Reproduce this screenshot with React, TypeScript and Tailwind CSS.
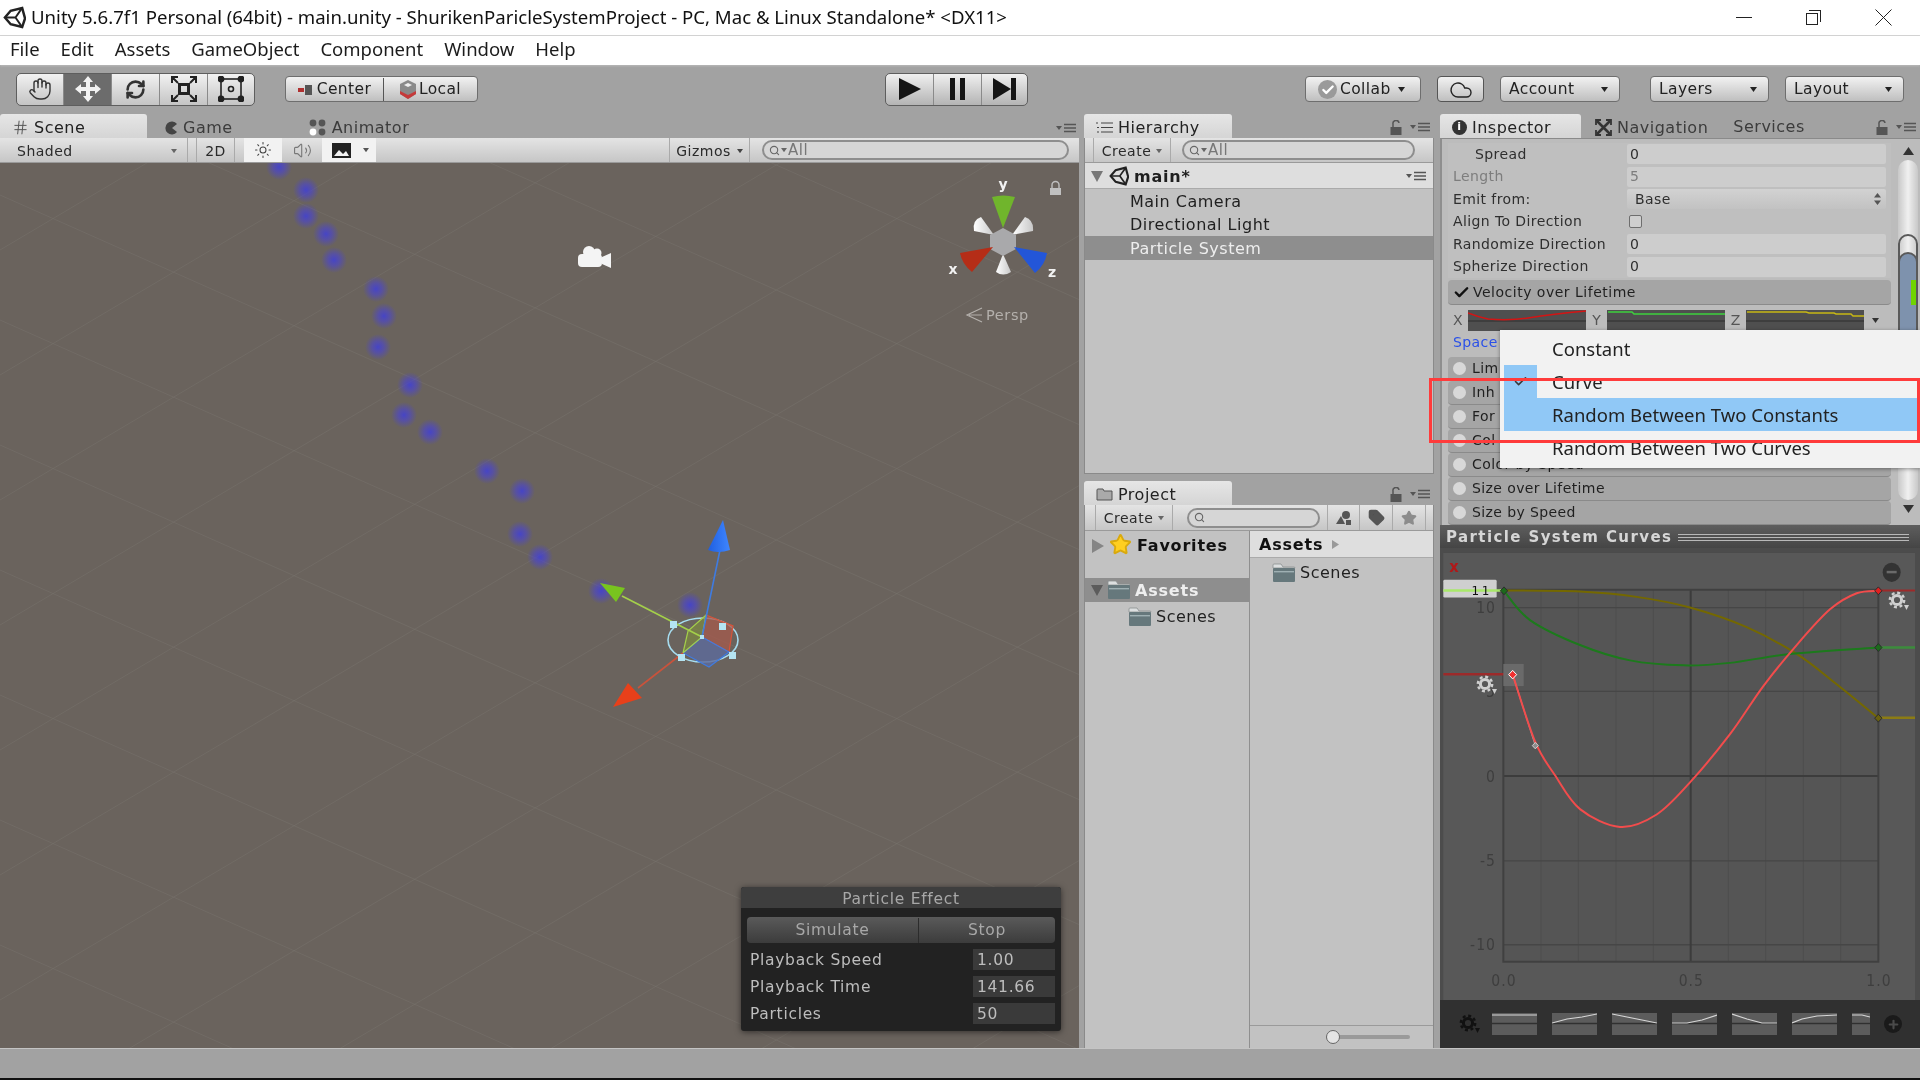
import React from 'react';
import { Hand, RefreshCw, Cloud, Sun, Volume2, Hash, Tag, Star, Search, Check, Plus } from 'lucide-react';

const smooth = (pts: number[][]) => {
  let d = `M${pts[0][0]} ${pts[0][1]}`;
  for (let i = 0; i < pts.length - 1; i++) {
    const p0 = pts[i - 1] || pts[i];
    const p1 = pts[i];
    const p2 = pts[i + 1];
    const p3 = pts[i + 2] || p2;
    d += ` C${p1[0] + (p2[0] - p0[0]) / 6} ${p1[1] + (p2[1] - p0[1]) / 6} ${p2[0] - (p3[0] - p1[0]) / 6} ${p2[1] - (p3[1] - p1[1]) / 6} ${p2[0]} ${p2[1]}`;
  }
  return d;
};

const UnityLogo = ({ size = 22, color = '#222' }: { size?: number; color?: string }) => (
  <svg width={size} height={size} viewBox="0 0 24 24" fill="none" stroke={color} strokeWidth="2.6">
    <path d="M2 12 L8 5 L20 2 L23 13 L20 22 L8 19 Z" />
    <path d="M2 12 H13 L20 2 M13 12 L20 22" strokeWidth="2" />
  </svg>
);

const MenuLines = () => (
  <svg width="20" height="10" viewBox="0 0 20 10" className="shrink-0">
    <path d="M0 3 H6 L3 7 Z" fill="#555" />
    <path d="M8 1.5 H20 M8 5 H20 M8 8.5 H20" stroke="#555" strokeWidth="1.4" />
  </svg>
);

const LockIcon = () => (
  <svg width="12" height="15" viewBox="0 0 12 15" className="shrink-0">
    <path d="M3 7 V4 a3 3 0 0 1 6 -1" fill="none" stroke="#555" strokeWidth="1.5" />
    <rect x="0.5" y="7" width="11" height="8" fill="#555" />
  </svg>
);

const Caret = ({ color = '#444', size = 7 }: { color?: string; size?: number }) => (
  <svg width={size} height={size * 0.7} viewBox="0 0 10 7" className="shrink-0">
    <path d="M0 0 H10 L5 7 Z" fill={color} />
  </svg>
);

const Gear = ({ color = '#d0d0d0' }: { color?: string }) => (
  <svg width="22" height="20" viewBox="0 0 22 20" className="shrink-0">
    <circle cx="9" cy="9" r="4.6" fill="none" stroke={color} strokeWidth="3" />
    <circle cx="9" cy="9" r="7.2" fill="none" stroke={color} strokeWidth="2.4" strokeDasharray="3 2.65" />
    <path d="M16 14 H21 L18.5 19 Z" fill={color} />
  </svg>
);

const FolderIcon = () => (
  <svg width="24" height="20" viewBox="0 0 24 20" className="shrink-0">
    <path d="M1 5 V2 Q1 1 2 1 H9 L11 4 H22 Q23 4 23 5 Z" fill="#dcdfe0" stroke="#8a8f91" strokeWidth="0.8" />
    <rect x="1" y="5" width="22" height="14" rx="1" fill="#66787c" />
    <rect x="2" y="8" width="20" height="1.4" fill="#9fb0b3" />
  </svg>
);

const Field = ({ children, className = '' }: { children?: React.ReactNode; className?: string }) => (
  <div className={`h-[20px] w-[259px] bg-[#cdcdcd] rounded-[2px] flex items-center px-[3px] ${className}`}>{children}</div>
);

const PropRow = ({ label, value, faded, indent }: { label: string; value: string; faded?: boolean; indent?: boolean }) => (
  <div className={`h-[22.5px] flex items-center text-[14px] tracking-[0.4px] ${faded ? 'text-[#7d7d7d]' : 'text-[#2f2f2f]'}`}>
    <div className={`w-[179px] shrink-0 ${indent ? 'pl-[27px]' : 'pl-[5px]'}`}>{label}</div>
    <Field>{value}</Field>
  </div>
);

const ModuleRow = ({ label }: { label: string }) => (
  <div className="h-[24px] shrink-0 bg-[#a5a5a5] rounded-[4px] border-b border-[#8a8a8a] flex items-center pl-[5px] gap-[6px] text-[14px] tracking-[0.4px] text-[#1f1f1f]">
    <div className="w-[13px] h-[13px] rounded-full bg-[#d8d8d8]" />
    <span>{label}</span>
  </div>
);

const MiniCurve = ({ d, color, w = 118 }: { d: string; color: string; w?: number }) => (
  <svg width={w} height="21" viewBox="0 0 118 21" className="bg-[#4f4f4f] shrink-0">
    <path d="M0 11 H118" stroke="#2e2e2e" strokeWidth="1" />
    <path d={d} fill="none" stroke={color} strokeWidth="1.4" />
  </svg>
);

const Preset = ({ d, w = 45 }: { d: string; w?: number }) => (
  <svg width={w} height="22" viewBox={`0 0 ${w} 22`} className="bg-[#5c5c5c] shrink-0">
    <path d={`M0 10.5 H${w}`} stroke="#303030" strokeWidth="1.4" />
    <path d={d} fill="none" stroke="#d6d6d6" strokeWidth="1.2" />
  </svg>
);

const ToolbarBtn = ({ children, className = '' }: { children: React.ReactNode; className?: string }) => (
  <div className={`h-[26px] pt-[1px] rounded-[4px] border border-[#6e6e6e] bg-linear-to-b from-[#f2f2f2] to-[#bfbfbf] flex items-center text-[15.5px] tracking-[0.4px] text-[#222] ${className}`}>
    {children}
  </div>
);

const Tab = ({ children, active, className = '' }: { children: React.ReactNode; active?: boolean; className?: string }) => (
  <div className={`h-[25px] pt-[3px] flex items-center gap-[5px] text-[16px] tracking-[0.5px] ${active ? 'bg-linear-to-b from-[#e6e6e6] to-[#d4d4d4] rounded-t-[3px] text-[#222]' : 'text-[#3c3c3c]'} ${className}`}>
    {children}
  </div>
);

const PanelToolbar = ({ children, className = '' }: { children: React.ReactNode; className?: string }) => (
  <div className={`flex items-center bg-linear-to-b from-[#e4e4e4] to-[#c6c6c6] border-b border-[#9a9a9a] text-[14px] tracking-[0.5px] text-[#2a2a2a] ${className}`}>
    {children}
  </div>
);

const ToolCell = ({ children, className = '' }: { children: React.ReactNode; className?: string }) => (
  <div className={`h-full pt-[2px] flex items-center ${className}`}>{children}</div>
);

const SearchPill = ({ w, all = true }: { w: number; all?: boolean }) => (
  <div style={{ width: w }} className="h-[20px] rounded-full border-2 border-[#8e8e8e] bg-[#d6d6d6] flex items-center pl-[5px] gap-[1px] text-[15px] text-[#777]">
    <Search size={11} color="#666" strokeWidth={2.4} />
    {all && <Caret color="#666" size={6} />}
    {all && <span>All</span>}
  </div>
);

const particles = [
  [279, 167], [306, 190], [306, 216], [326, 234], [334, 260], [376, 289], [384, 316], [378, 347],
  [410, 385], [404, 415], [430, 432], [487, 471], [522, 491], [520, 534], [540, 557], [601, 591], [690, 605],
];

const SceneView = () => (
  <svg width="1080" height="885" viewBox="0 163 1080 885" className="block">
    <defs>
      <radialGradient id="dot">
        <stop offset="0%" stopColor="#3d3de0" stopOpacity="0.8" />
        <stop offset="45%" stopColor="#4a44d0" stopOpacity="0.6" />
        <stop offset="100%" stopColor="#4a44d0" stopOpacity="0" />
      </radialGradient>
      <linearGradient id="blueCone" x1="0" x2="1">
        <stop offset="0%" stopColor="#1f5fe0" />
        <stop offset="100%" stopColor="#3f86ff" />
      </linearGradient>
      <linearGradient id="whiteCone" x1="0" x2="1">
        <stop offset="0%" stopColor="#fff" />
        <stop offset="100%" stopColor="#c8c8c8" />
      </linearGradient>
    </defs>
    <rect x="0" y="163" width="1080" height="885" fill="#6a635d" />
    {Array.from({ length: 16 }).map((_, i) => (
      <line key={i} x1="0" y1={-180 + i * 125} x2="1080" y2={-180 + i * 125 + 480} stroke="#7b756f" strokeOpacity="0.45" />
    ))}
    {Array.from({ length: 16 }).map((_, i) => (
      <line key={i} x1="0" y1={250 + i * 125} x2="1080" y2={250 + i * 125 - 640} stroke="#7b756f" strokeOpacity="0.45" />
    ))}
    {particles.map(([x, y], i) => (
      <circle key={i} cx={x} cy={y} r="13" fill="url(#dot)" />
    ))}

    {/* camera icon */}
    <g fill="#f4f4f4">
      <rect x="578" y="254" width="24" height="13" rx="4" />
      <circle cx="589" cy="252" r="6" />
      <circle cx="597" cy="253" r="4.5" />
      <path d="M602 257 L611 253 V268 L602 264 Z" />
    </g>

    {/* move gizmo */}
    <ellipse cx="703" cy="640" rx="35" ry="22" fill="none" stroke="#a6dcef" strokeWidth="1.6" />
    <path d="M706 615 L733 626 L729 652 L702 637 Z" fill="#a65a4c" fillOpacity="0.75" stroke="#d8543a" strokeWidth="1.2" />
    <path d="M683 653 L702 637 L729 652 L709 667 Z" fill="#5d6a9c" fillOpacity="0.8" stroke="#3f7be0" strokeWidth="1.2" />
    <path d="M688 631 L706 615 L702 637 L683 653 Z" fill="#7d8a40" fillOpacity="0.7" stroke="#a4d04a" strokeWidth="1.2" />
    <line x1="702" y1="637" x2="720" y2="550" stroke="#3f7be0" strokeWidth="1.6" />
    <line x1="702" y1="637" x2="622" y2="596" stroke="#a4d04a" strokeWidth="1.6" />
    <line x1="683" y1="653" x2="638" y2="688" stroke="#c9533c" strokeWidth="1.6" />
    <path d="M723 520 L708 550 Q718 554 730 550 Z" fill="url(#blueCone)" />
    <path d="M600 583 L625 588 L616 602 Z" fill="#78c41e" />
    <path d="M613 707 L628 683 L642 698 Z" fill="#e8401a" />
    <g fill="#b4e4f2">
      <rect x="670" y="621" width="7" height="7" />
      <rect x="719" y="623" width="7" height="7" />
      <rect x="729" y="652" width="7" height="7" />
      <rect x="678" y="654" width="7" height="7" />
      <rect x="700" y="635" width="4" height="4" />
    </g>

    {/* view cube */}
    <path d="M994 235 L974 231 Q972 220 981 217 Z" fill="url(#whiteCone)" />
    <path d="M1012 235 L1033 231 Q1034 220 1025 217 Z" fill="url(#whiteCone)" />
    <path d="M1003 254 L996 272 Q1003 277 1011 272 Z" fill="url(#whiteCone)" />
    <path d="M1003 228 L1016 235 V249 L1003 256 L990 249 V235 Z" fill="#a9a9ab" />
    <path d="M992 197 Q1003 194 1015 197 L1003 228 Z" fill="#70b52c" />
    <path d="M993 247 L960 253 Q962 264 972 272 Z" fill="#b52d17" />
    <path d="M1014 247 L1047 253 Q1045 265 1035 273 Z" fill="#2356d8" />
    <text x="1003" y="189" textAnchor="middle" fontSize="14" fontWeight="700" fill="#f2f2f2">y</text>
    <text x="953" y="274" textAnchor="middle" fontSize="14" fontWeight="700" fill="#f2f2f2">x</text>
    <text x="1052" y="277" textAnchor="middle" fontSize="14" fontWeight="700" fill="#f2f2f2">z</text>
    <path d="M1052 188 V185 a3.5 3.5 0 0 1 7 0 V188" fill="none" stroke="#c0c0c0" strokeWidth="1.4" />
    <rect x="1050" y="188" width="11" height="7" fill="#c0c0c0" />
    <path d="M982 308 L967 315 L982 322 M982 315 H969" fill="none" stroke="#b4b0ac" strokeWidth="1.2" />
    <text x="986" y="320" fontSize="14.5" letterSpacing="0.6" fill="#b4b0ac">Persp</text>
  </svg>
);

const CurvesGraph = () => {
  const red = [[248, 433], [315, 620], [375, 715], [450, 810], [570, 860], [680, 825], [780, 735], [900, 600], [1000, 465], [1100, 350], [1200, 250], [1280, 205], [1345, 198]];
  const green = [[222, 198], [300, 280], [450, 350], [600, 393], [760, 407], [900, 400], [1080, 375], [1345, 357]];
  const yellow = [[222, 197], [450, 200], [620, 215], [780, 245], [950, 300], [1100, 375], [1220, 460], [1345, 555]];
  const ns = { vectorEffect: 'non-scaling-stroke' as const };
  const diamond = (x: number, y: number, fill: string, stroke: string, s = 11) => (
    <path d={`M${x - s} ${y} L${x} ${y - s} L${x + s} ${y} L${x} ${y + s} Z`} fill={fill} stroke={stroke} strokeWidth="1" {...ns} />
  );
  return (
    <svg width="480" height="452" viewBox="30 78 1440 1267" preserveAspectRatio="none" className="block">
      <rect x="30" y="78" width="1440" height="1267" fill="#4c4c4c" />
      <rect x="40" y="92" width="1415" height="1253" fill="#585858" />
      <rect x="220" y="195" width="1125" height="1043" fill="#555" />
      {[333, 445, 558, 670, 895, 1007, 1120, 1232].map((x) => (
        <line key={x} x1={x} y1="195" x2={x} y2="1238" stroke="#4e4e4e" {...ns} />
      ))}
      {[245, 480, 955, 1190].map((y) => (
        <line key={y} x1="220" y1={y} x2="1345" y2={y} stroke="#464646" strokeWidth="1.4" {...ns} />
      ))}
      <line x1="220" y1="717" x2="1345" y2="717" stroke="#3c3c3c" strokeWidth="2" {...ns} />
      <line x1="782" y1="195" x2="782" y2="1238" stroke="#3c3c3c" strokeWidth="2" {...ns} />
      <rect x="220" y="195" width="1125" height="1043" fill="none" stroke="#404040" strokeWidth="2" {...ns} />
      <g fontSize="42" fill="#3e3e3e" textAnchor="end" letterSpacing="3">
        <text x="198" y="260">10</text>
        <text x="198" y="495">5</text>
        <text x="198" y="733">0</text>
        <text x="198" y="970">-5</text>
        <text x="198" y="1205">-10</text>
      </g>
      <g fontSize="42" fill="#3e3e3e" textAnchor="middle" letterSpacing="3">
        <text x="222" y="1305">0.0</text>
        <text x="784" y="1305">0.5</text>
        <text x="1347" y="1305">1.0</text>
      </g>
      <rect x="40" y="167" width="160" height="50" rx="4" fill="#cfcfcf" />
      <line x1="40" y1="197" x2="220" y2="197" stroke="#a8e86a" strokeWidth="2.4" {...ns} />
      <text x="186" y="210" fontSize="36" fill="#111" textAnchor="end" letterSpacing="8">11</text>
      <text x="72" y="146" fontSize="44" fill="#b01818" textAnchor="middle" fontWeight="700">x</text>
      <path d="M40 432 H240" stroke="#9c2a2a" strokeWidth="2.4" {...ns} />
      <path d="M1345 197 H1455" stroke="#9c2a2a" strokeWidth="2" {...ns} />
      <path d="M1345 357 H1455" stroke="#3c8c3c" strokeWidth="2.4" {...ns} />
      <path d="M1345 554 H1455" stroke="#8c7c14" strokeWidth="2.4" {...ns} />
      <rect x="220" y="403" width="61" height="62" fill="#6a6a6a" />
      <path d="M248 433 L316 632" stroke="#a8a8a8" strokeWidth="1.2" {...ns} />
      <path d={smooth(yellow)} fill="none" stroke="#746800" strokeWidth="2" {...ns} />
      <path d={smooth(green)} fill="none" stroke="#1c7a1c" strokeWidth="2" {...ns} />
      <path d={smooth(red)} fill="none" stroke="#f24c4c" strokeWidth="2" {...ns} />
      {diamond(222, 198, '#1c6a1c', '#2c2c2c')}
      {diamond(1345, 357, '#1c6a1c', '#2c2c2c')}
      {diamond(1345, 555, '#6a6010', '#2c2c2c')}
      {diamond(1345, 198, '#e02020', '#2c2c2c')}
      {diamond(248, 433, '#f03030', '#ffffff', 12)}
      {diamond(316, 632, '#8c8c8c', '#d0d0d0', 9)}
      <circle cx="1385" cy="146" r="27" fill="#333" />
      <rect x="1370" y="142" width="30" height="7" fill="#6a6a6a" />
    </svg>
  );
};

export default function App() {
  return (
    <div className="relative w-[1920px] h-[1080px] overflow-hidden flex flex-col bg-[#a2a2a2] font-['DejaVu_Sans',sans-serif] blur-[0.4px]">
      {/* window title */}
      <div className="h-[36px] shrink-0 bg-white border-b border-[#d4d4d4] flex items-center font-['Noto_Sans',sans-serif] text-[18.6px] text-[#111] pl-[3px] pb-[1px]">
        <UnityLogo size={23} />
        <span className="ml-[5px]">Unity 5.6.7f1 Personal (64bit) - main.unity - ShurikenParicleSystemProject - PC, Mac &amp; Linux Standalone* &lt;DX11&gt;</span>
        <div className="ml-auto flex items-center pr-[28px] gap-[54px]">
          <div className="w-[16px] h-px bg-[#222]" />
          <div className="relative w-[15px] h-[15px]">
            <div className="absolute left-0 bottom-0 w-[12px] h-[12px] border border-[#222] bg-white" />
            <div className="absolute right-0 top-0 w-[12px] h-[12px] border-t border-r border-[#222]" />
          </div>
          <svg width="17" height="17" viewBox="0 0 17 17"><path d="M0.5 0.5 L16.5 16.5 M16.5 0.5 L0.5 16.5" stroke="#222" /></svg>
        </div>
      </div>

      {/* menu */}
      <div className="h-[29px] shrink-0 bg-white pb-[3px] flex items-center gap-[21px] pl-[10px] font-['Noto_Sans',sans-serif] text-[18.5px] text-[#1c1c1c] shadow-[0_1px_2px_#bbb]">
        {['File', 'Edit', 'Assets', 'GameObject', 'Component', 'Window', 'Help'].map((m) => (
          <span key={m}>{m}</span>
        ))}
      </div>

      {/* toolbar */}
      <div className="h-[48px] shrink-0 flex items-center pl-[16px]">
        <div className="flex h-[33px] w-[239px] rounded-[5px] border border-[#5e5e5e] bg-linear-to-b from-[#f2f2f2] to-[#c4c4c4]">
          <div className="w-[47px] flex items-center justify-center border-r border-[#8a8a8a]"><Hand size={24} strokeWidth={1.4} color="#333" /></div>
          <div className="w-[48px] flex items-center justify-center bg-[#6c6c6c] border-r border-[#8a8a8a]">
            <svg width="26" height="26" viewBox="0 0 26 26"><path d="M13 0 L18 6 H15 V11 H20 V8 L26 13 L20 18 V15 H15 V20 H18 L13 26 L8 20 H11 V15 H6 V18 L0 13 L6 8 V11 H11 V6 H8 Z" fill="#f2f2f2" /></svg>
          </div>
          <div className="w-[48px] flex items-center justify-center border-r border-[#8a8a8a]"><RefreshCw size={21} strokeWidth={3} color="#333" /></div>
          <div className="w-[48px] flex items-center justify-center border-r border-[#8a8a8a]">
            <svg width="26" height="26" viewBox="0 0 26 26" fill="none" stroke="#222" strokeWidth="2">
              <rect x="8.5" y="8.5" width="9" height="9" strokeWidth="3" />
              <path d="M1 7 V1 H7 M1 1 L7 7 M19 1 H25 V7 M25 1 L19 7 M1 19 V25 H7 M1 25 L7 19 M25 19 V25 H19 M25 25 L19 19" />
            </svg>
          </div>
          <div className="flex-1 flex items-center justify-center">
            <svg width="26" height="26" viewBox="0 0 26 26" fill="none" stroke="#222" strokeWidth="1.6">
              <rect x="3" y="3" width="20" height="20" />
              <circle cx="13" cy="13" r="2.5" />
              <g fill="#222"><circle cx="3" cy="3" r="2.6" /><circle cx="23" cy="3" r="2.6" /><circle cx="3" cy="23" r="2.6" /><circle cx="23" cy="23" r="2.6" /></g>
            </svg>
          </div>
        </div>

        <ToolbarBtn className="ml-[30px] w-[193px]">
          <div className="w-[98px] h-full border-r border-[#555] flex items-center justify-center gap-[5px]">
            <svg width="14" height="10" viewBox="0 0 14 10"><rect x="0" y="3" width="6" height="4" fill="#b03030" /><rect x="7" y="0" width="7" height="10" fill="#555" /></svg>
            <span>Center</span>
          </div>
          <div className="flex-1 flex items-center justify-center gap-[3px]">
            <svg width="16" height="19" viewBox="0 0 16 19"><path d="M8 0 L16 4 V14 L8 19 L0 14 V4 Z" fill="#8a8a8a" /><path d="M0 11 V14 L8 19 L16 14 V11 L8 15 Z" fill="#c53a3a" /><path d="M4 5 L8 3 L12 5 L8 7 Z" fill="#eee" /></svg>
            <span>Local</span>
          </div>
        </ToolbarBtn>

        <div className="ml-[407px] flex h-[33px] w-[143px] rounded-[5px] border border-[#5e5e5e] bg-linear-to-b from-[#f0f0f0] to-[#b4b4b4]">
          <div className="w-[48px] flex items-center justify-center border-r border-[#8a8a8a]">
            <svg width="22" height="22" viewBox="0 0 22 22"><path d="M0 0 L22 11 L0 22 Z" fill="#151515" /></svg>
          </div>
          <div className="w-[48px] flex items-center justify-center border-r border-[#8a8a8a]">
            <svg width="15" height="22" viewBox="0 0 15 22"><rect width="5" height="22" fill="#151515" /><rect x="10" width="5" height="22" fill="#151515" /></svg>
          </div>
          <div className="flex-1 flex items-center justify-center">
            <svg width="24" height="22" viewBox="0 0 24 22"><path d="M0 0 L18 11 L0 22 Z" fill="#151515" /><rect x="18" width="5" height="22" fill="#151515" /></svg>
          </div>
        </div>

        <ToolbarBtn className="ml-[277px] w-[116px] pl-[12px] gap-[3px]">
          <div className="w-[19px] h-[19px] rounded-full bg-[#9a9a9a] flex items-center justify-center"><Check size={14} strokeWidth={4} color="#fff" /></div>
          <span>Collab</span>
          <span className="ml-[4px]"><Caret color="#222" /></span>
        </ToolbarBtn>
        <ToolbarBtn className="ml-[16px] w-[47px] justify-center border-[#555]"><Cloud size={24} strokeWidth={1.4} color="#222" /></ToolbarBtn>
        <ToolbarBtn className="ml-[16px] w-[120px] pl-[8px] justify-between pr-[11px]"><span>Account</span><Caret color="#222" /></ToolbarBtn>
        <ToolbarBtn className="ml-[30px] w-[119px] pl-[8px] justify-between pr-[11px]"><span>Layers</span><Caret color="#222" /></ToolbarBtn>
        <ToolbarBtn className="ml-[16px] w-[119px] pl-[8px] justify-between pr-[11px]"><span>Layout</span><Caret color="#222" /></ToolbarBtn>
      </div>

      <div className="h-[935px] shrink-0 flex">
        {/* scene column */}
        <div className="w-[1084px] shrink-0 flex flex-col">
          <div className="h-[25px] shrink-0 flex items-center">
            <Tab active className="w-[147px] pl-[12px] mt-px"><Hash size={17} strokeWidth={1.4} color="#555" /><span>Scene</span></Tab>
            <Tab className="ml-[17px] mt-px">
              <svg width="14" height="14" viewBox="0 0 14 14"><path d="M13 3 A6.5 6.5 0 1 0 13 11 L8 7 Z" fill="#444" /></svg>
              <span>Game</span>
            </Tab>
            <Tab className="ml-[76px] mt-px">
              <svg width="18" height="18" viewBox="0 0 18 18" fill="#555"><circle cx="4" cy="4" r="3.4" /><circle cx="13" cy="4" r="3.4" /><circle cx="4" cy="13" r="3.4" fill="#fff" /><circle cx="13" cy="13" r="3.4" /></svg>
              <span>Animator</span>
            </Tab>
            <div className="ml-auto mr-[8px] mt-[4px]"><MenuLines /></div>
          </div>
          <PanelToolbar className="h-[25px] shrink-0 w-[1079px]">
            <ToolCell className="w-[188px] pl-[17px] pr-[10px] justify-between border-r border-[#aaa] font-medium">
              <span>Shaded</span><Caret color="#666" size={6} />
            </ToolCell>
            <ToolCell className="w-[39px] ml-[8px] border-x border-[#aaa] justify-center">2D</ToolCell>
            <div className="w-[38px] h-full ml-[9px] bg-[#f2f2f2] flex items-center justify-center"><Sun size={18} strokeWidth={1.4} color="#444" /></div>
            <div className="w-[38px] h-full ml-[1px] flex items-center justify-center"><Volume2 size={19} strokeWidth={1.4} color="#777" /></div>
            <div className="w-[54px] h-full ml-[1px] bg-[#f2f2f2] flex items-center pl-[10px] gap-[12px]">
              <svg width="19" height="15" viewBox="0 0 19 15"><rect width="19" height="15" fill="#222" /><path d="M2 13 L7 7 L11 11 L14 8 L17 13 Z" fill="#f2f2f2" /></svg>
              <Caret color="#555" size={6} />
            </div>
            <ToolCell className="w-[81px] ml-[293px] border-x border-[#aaa] justify-center gap-[6px]"><span>Gizmos</span><Caret color="#444" size={6} /></ToolCell>
            <div className="ml-[12px]"><SearchPill w={307} /></div>
          </PanelToolbar>
          <div className="relative w-[1079px] flex-1 overflow-hidden">
            <SceneView />
            <div className="absolute left-[741px] top-[724px] w-[320px] h-[144px] rounded-[3px] bg-[#222] shadow-[0_1px_6px_#0008] text-[15.5px] tracking-[0.7px] text-[#bdbdbd]">
              <div className="h-[21px] pt-[4px] bg-[#3e3e3e] rounded-t-[3px] flex items-center justify-center text-[#a8a8a8]">Particle Effect</div>
              <div className="mx-[6px] mt-[9px] h-[26px] pt-[1px] flex rounded-[4px] bg-linear-to-b from-[#5a5a5a] to-[#3c3c3c] text-[#a8a8a8]">
                <div className="w-[172px] border-r border-[#2c2c2c] flex items-center justify-center">Simulate</div>
                <div className="flex-1 flex items-center justify-center">Stop</div>
              </div>
              <div className="mt-[6px] flex flex-col gap-[6px] pl-[9px] pr-[6px]">
                {[['Playback Speed', '1.00'], ['Playback Time', '141.66'], ['Particles', '50']].map(([k, v]) => (
                  <div key={k} className="h-[21px] flex items-center justify-between">
                    <span className="pt-[2px]">{k}</span>
                    <div className="w-[82px] h-full pt-[2px] bg-[#3a3a3a] flex items-center pl-[4px]">{v}</div>
                  </div>
                ))}
              </div>
            </div>
          </div>
        </div>

        {/* hierarchy + project */}
        <div className="w-[350px] shrink-0 flex flex-col">
          <div className="h-[25px] shrink-0 flex items-center justify-between pr-[4px]">
            <Tab active className="w-[148px] pl-[12px] mt-px">
              <svg width="17" height="13" viewBox="0 0 17 13" stroke="#444" strokeWidth="1.2"><path d="M5 2 H17 M5 6.5 H17 M5 11 H17 M0 2 H2 M1 6.5 H3 M1 11 H3" /></svg>
              <span>Hierarchy</span>
            </Tab>
            <div className="flex items-center gap-[8px] mt-[3px]"><LockIcon /><MenuLines /></div>
          </div>
          <div className="h-[336px] shrink-0 bg-[#c2c2c2] border-x border-b border-[#8a8a8a] flex flex-col text-[16px] tracking-[0.5px] text-[#1f1f1f]">
            <PanelToolbar className="h-[25px] shrink-0">
              <ToolCell className="ml-[8px] w-[78px] border-x border-[#aaa] justify-center gap-[5px]"><span>Create</span><Caret color="#666" size={6} /></ToolCell>
              <div className="ml-[11px]"><SearchPill w={233} /></div>
            </PanelToolbar>
            <div className="h-[26px] shrink-0 bg-[#dedede] border-b border-[#aaa] flex items-center pl-[6px] pr-[7px]">
              <svg width="12" height="12" viewBox="0 0 12 12"><path d="M0 1 H12 L6 12 Z" fill="#777" /></svg>
              <span className="ml-[6px]"><UnityLogo size={20} /></span>
              <span className="ml-[5px] pt-[2px] font-bold tracking-[0.8px]">main*</span>
              <span className="ml-auto"><MenuLines /></span>
            </div>
            {['Main Camera', 'Directional Light'].map((r) => (
              <div key={r} className="h-[23.5px] pt-[2px] shrink-0 pl-[45px] flex items-center">{r}</div>
            ))}
            <div className="h-[24px] pt-[2px] shrink-0 pl-[45px] flex items-center bg-[#8e8e8e] text-[#eeeeee]">Particle System</div>
          </div>

          <div className="h-[25px] shrink-0 mt-[6px] flex items-center justify-between pr-[4px]">
            <Tab active className="w-[148px] pl-[12px] mt-px">
              <svg width="17" height="13" viewBox="0 0 17 13"><path d="M1 12 V2 Q1 1 2 1 H7 L8 3 H16 V12 Z" fill="#aaa" stroke="#555" /></svg>
              <span>Project</span>
            </Tab>
            <div className="flex items-center gap-[8px] mt-[3px]"><LockIcon /><MenuLines /></div>
          </div>
          <div className="flex-1 bg-[#c2c2c2] border-x border-[#8a8a8a] flex flex-col text-[16px] tracking-[0.5px] text-[#1f1f1f]">
            <PanelToolbar className="h-[26px] shrink-0">
              <ToolCell className="ml-[10px] w-[78px] border-x border-[#aaa] justify-center gap-[5px]"><span>Create</span><Caret color="#666" size={6} /></ToolCell>
              <div className="ml-[14px] mr-[7px]"><SearchPill w={133} all={false} /></div>
              <div className="w-[33px] h-full border-x border-[#aaa] flex items-center justify-center">
                <svg width="16" height="16" viewBox="0 0 16 16" fill="#555"><circle cx="10" cy="5" r="4" /><path d="M0 14 L5 6 L9 14 Z" /><rect x="10" y="10" width="5" height="5" /></svg>
              </div>
              <div className="w-[33px] h-full border-r border-[#aaa] flex items-center justify-center"><Tag size={17} fill="#555" color="#555" /></div>
              <div className="w-[33px] h-full border-r border-[#aaa] flex items-center justify-center"><Star size={16} fill="#8c8c8c" color="#8c8c8c" /></div>
            </PanelToolbar>
            <div className="flex-1 flex min-h-0">
              <div className="w-[165px] shrink-0 border-r border-[#8f8f8f] flex flex-col">
                <div className="h-[47px] shrink-0 pl-[7px] pt-[2px] flex items-start font-bold tracking-[0.8px] text-[#111] gap-[5px]">
                  <svg width="12" height="16" viewBox="0 0 12 16" className="mt-[5px]"><path d="M0 1 L12 8 L0 15 Z" fill="#858585" /></svg>
                  <Star size={23} fill="#ffcf20" color="#d9a90e" className="shrink-0" />
                  <span className="mt-[1px]">Favorites</span>
                </div>
                <div className="h-[24px] shrink-0 bg-[#8e8e8e] pl-[6px] flex items-center gap-[4px] font-bold tracking-[0.8px] text-[#eeeeee]">
                  <svg width="12" height="12" viewBox="0 0 12 12"><path d="M0 1 H12 L6 12 Z" fill="#5c5c5c" /></svg>
                  <FolderIcon />
                  <span className="pt-[2px]">Assets</span>
                </div>
                <div className="h-[27px] pt-[2px] shrink-0 pl-[43px] flex items-center gap-[4px]"><FolderIcon /><span>Scenes</span></div>
              </div>
              <div className="flex-1 flex flex-col min-w-0">
                <div className="h-[27px] shrink-0 bg-[#dedede] border-b border-[#aaa] pl-[9px] flex items-center gap-[9px] font-bold tracking-[0.8px] text-[#111]">
                  <span className="pt-[2px]">Assets</span>
                  <svg width="7" height="9" viewBox="0 0 7 9"><path d="M0 0 L7 4.5 L0 9 Z" fill="#999" /></svg>
                </div>
                <div className="h-[28px] pt-[1px] shrink-0 pl-[22px] flex items-center gap-[4px]"><FolderIcon /><span>Scenes</span></div>
                <div className="flex-1" />
                <div className="h-[23px] shrink-0 border-t border-[#9a9a9a] flex items-center pl-[76px]">
                  <div className="relative w-[84px] h-[4px] bg-[#9a9a9a] rounded-full">
                    <div className="absolute left-0 top-[-5px] w-[14px] h-[14px] rounded-full bg-[#e4e4e4] border border-[#666]" />
                  </div>
                </div>
              </div>
            </div>
          </div>
        </div>

        {/* inspector + curves */}
        <div className="w-[486px] shrink-0 pl-[6px] flex flex-col">
          <div className="h-[25px] shrink-0 flex items-center pr-[4px]">
            <Tab active className="w-[141px] pl-[12px] mt-px text-[#111]">
              <div className="w-[15px] h-[15px] rounded-full bg-[#333] text-white text-[11px] font-bold flex items-center justify-center">i</div>
              <span>Inspector</span>
            </Tab>
            <Tab className="ml-[14px] mt-px">
              <svg width="17" height="17" viewBox="0 0 17 17" fill="none" stroke="#333" strokeWidth="2.6"><path d="M2 2 L15 15 M15 2 L2 15" /><path d="M1 6 V1 H6 M11 1 H16 V6 M1 11 V16 H6 M11 16 H16 V11" strokeWidth="1.8" /></svg>
              <span>Navigation</span>
            </Tab>
            <Tab className="ml-[25px]">Services</Tab>
            <div className="ml-auto flex items-center gap-[8px] mt-[3px]"><LockIcon /><MenuLines /></div>
          </div>

          <div className="h-[387px] shrink-0 flex border-t border-[#8a8a8a] bg-[#bcbcbc]">
            <div className="w-[451px] shrink-0 pl-[6px] border-l-2 border-[#8e8e8e] flex flex-col overflow-hidden">
              <div className="mt-[4px] bg-[#bfbfbf] shrink-0">
                <PropRow indent label="Spread" value="0" />
                <PropRow faded label="Length" value="5" />
                <div className="h-[22.5px] flex items-center text-[14px] tracking-[0.4px] text-[#2f2f2f]">
                  <div className="w-[179px] shrink-0 pl-[5px]">Emit from:</div>
                  <Field className="bg-linear-to-b from-[#d2d2d2] to-[#c2c2c2] pl-[8px] pr-[5px] justify-between">
                    <span>Base</span>
                    <svg width="7" height="12" viewBox="0 0 7 12" fill="#555"><path d="M3.5 0 L7 4.5 H0 Z M3.5 12 L7 7.5 H0 Z" /></svg>
                  </Field>
                </div>
                <div className="h-[22.5px] flex items-center text-[14px] tracking-[0.4px] text-[#2f2f2f]">
                  <div className="w-[179px] shrink-0 pl-[5px]">Align To Direction</div>
                  <div className="ml-[2px] w-[13px] h-[13px] bg-[#cfcfcf] border border-[#6e6e6e] rounded-[2px]" />
                </div>
                <PropRow label="Randomize Direction" value="0" />
                <PropRow label="Spherize Direction" value="0" />
              </div>
              <div className="mt-[2px] h-[25px] shrink-0 bg-[#a5a5a5] rounded-[4px] border-b border-[#8a8a8a] flex items-center pl-[5px] gap-[3px] text-[14px] tracking-[0.5px] text-[#1f1f1f]">
                <Check size={17} strokeWidth={3.4} color="#111" />
                <span>Velocity over Lifetime</span>
              </div>
              <div className="mt-[5px] h-[21px] shrink-0 flex items-center text-[14px] text-[#555] relative">
                <span className="w-[20px] pl-[5px]">X</span>
                <MiniCurve color="#d41414" d="M0 3 Q10 7 20 9 Q40 11 60 8 Q85 4 118 1" />
                <span className="w-[21px] text-center">Y</span>
                <MiniCurve color="#3ed23e" d="M1 2 H25 L27 4 H118" />
                <span className="w-[21px] text-center">Z</span>
                <MiniCurve color="#c8b814" d="M1 2 H60 L63 3 H88 L90 4 H105 L107 6 H118" />
                <span className="ml-[8px]"><Caret color="#333" /></span>
              </div>
              <div className="h-[26px] pb-[4px] shrink-0 pl-[5px] flex items-center text-[14px] tracking-[0.4px] text-[#2a50e8]">Space</div>
              <div className="flex flex-col">
                {['Lim', 'Inh', 'For', 'Col', 'Color by Speed', 'Size over Lifetime', 'Size by Speed'].map((m) => (
                  <ModuleRow key={m} label={m} />
                ))}
              </div>
            </div>
            <div className="flex-1 flex flex-col items-center pt-[8px] pb-[12px] pl-[7px] pr-[2px]">
              <svg width="11" height="8" viewBox="0 0 11 8"><path d="M5.5 0 L11 8 H0 Z" fill="#333" /></svg>
              <div className="relative mt-[5px] w-[20px] flex-1 rounded-full bg-linear-to-r from-[#c8c8c8] via-[#f0f0f0] to-[#c8c8c8]">
                <div className="absolute inset-x-0 top-[74px] h-[110px] rounded-full border-2 border-[#5a5a5a]" />
                <div className="absolute inset-x-0 top-[92px] h-[92px] rounded-full bg-[#7e92ad] border-2 border-[#5a5a5a]" />
                <div className="absolute left-[13px] top-[120px] w-[5px] h-[25px] bg-[#6fd400]" />
              </div>
              <svg width="11" height="8" viewBox="0 0 11 8" className="mt-[5px]"><path d="M0 0 H11 L5.5 8 Z" fill="#333" /></svg>
            </div>
          </div>

          {/* curves editor */}
          <div className="flex-1 flex flex-col bg-[#333] min-h-0">
            <div className="h-[23px] shrink-0 pt-[1px] bg-linear-to-b from-[#5e5e5e] to-[#454545] flex items-center pl-[6px] gap-[6px] text-[15px] font-bold tracking-[1.4px] text-[#d6d6d6]">
              <span>Particle System Curves</span>
              <div className="w-[231px] h-[7px] border-y border-[#b8b8b8] relative">
                <div className="absolute inset-x-0 top-[2px] h-px bg-[#b8b8b8]" />
              </div>
            </div>
            <div className="relative shrink-0 h-[452px]">
              <CurvesGraph />
              <div className="absolute left-[448px] top-[43px]"><Gear /></div>
              <div className="absolute left-[36px] top-[127px]"><Gear /></div>
            </div>
            <div className="h-[48px] shrink-0 bg-[#303030] flex items-center pl-[19px] pr-[18px]">
              <Gear color="#111" />
              <div className="ml-[11px] flex gap-[15px]">
                <Preset d="M0 2 H45" />
                <Preset d="M0 10 L15 6 L30 4 L45 1" />
                <Preset d="M0 1 L15 4 L30 7 L45 10" />
                <Preset d="M0 10 L15 10 L30 7 L45 2" />
                <Preset d="M0 1 L15 6 L30 10 L45 10" />
                <Preset d="M0 10 L10 6 L25 3 L45 2" />
                <Preset w={18} d="M0 2 H10 L18 4" />
              </div>
              <div className="ml-auto w-[18px] h-[18px] rounded-full bg-[#1a1a1a] flex items-center justify-center"><Plus size={13} strokeWidth={4} color="#4a4a4a" /></div>
            </div>
          </div>
        </div>
      </div>

      <div className="flex-1 bg-[#a2a2a2] border-t border-[#c4c4c4]" />
      <div className="h-[2px] shrink-0 bg-[#111]" />

      {/* variant popup over the inspector */}
      <div className="absolute left-[1500px] top-[330px] w-[420px] h-[138px] bg-[#f2f2f2] shadow-[0_1px_4px_#0006] font-['Noto_Sans',sans-serif] text-[18.5px] text-[#222] pt-[2px]">
        <div className="h-[33px] pl-[52px] flex items-center">Constant</div>
        <div className="h-[33px] pl-[52px] flex items-center relative">
          <div className="absolute left-[4px] top-0 w-[33px] h-[33px] bg-[#90c8f6] flex items-center justify-center"><Check size={15} strokeWidth={2.6} color="#3a3a3a" /></div>
          Curve
        </div>
        <div className="h-[33px] ml-[4px] mr-[3px] pl-[48px] flex items-center bg-[#90c8f6]">Random Between Two Constants</div>
        <div className="h-[33px] pl-[52px] flex items-center">Random Between Two Curves</div>
      </div>
      <div className="absolute left-[1429px] top-[378px] w-[491px] h-[65px] border-[3px] border-[#ff3b3b]" />
    </div>
  );
}
